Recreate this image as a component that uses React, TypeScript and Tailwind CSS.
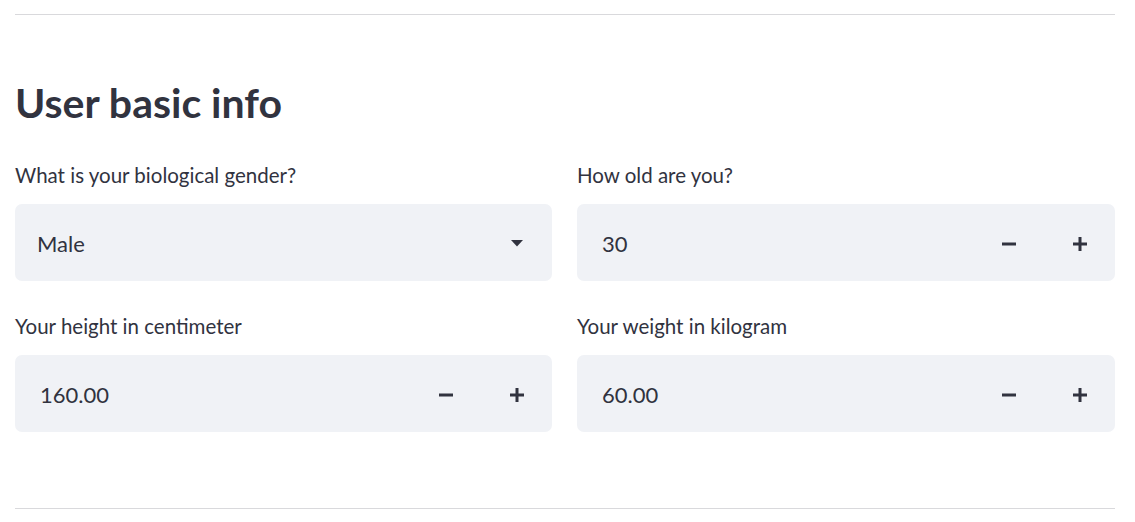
import React from "react";

function Minus() {
  return (
    <svg width="14" height="14" viewBox="0 0 14 14" className="text-[#31333f]">
      <rect x="0" y="5.5" width="14" height="3" fill="currentColor" />
    </svg>
  );
}

function Plus() {
  return (
    <svg width="14" height="14" viewBox="0 0 14 14" className="text-[#31333f]">
      <rect x="0" y="5.5" width="14" height="3" fill="currentColor" />
      <rect x="5.5" y="0" width="3" height="14" fill="currentColor" />
    </svg>
  );
}

function Caret() {
  return (
    <svg width="12" height="7" viewBox="0 0 12 7" className="text-[#31333f]">
      <path d="M0 0 L12 0 L6 6.5 Z" fill="currentColor" />
    </svg>
  );
}

function Label({ children }: { children: React.ReactNode }) {
  return <div className="mb-[17px] h-[24px] text-[20.5px] leading-[24px] text-[#31333f]">{children}</div>;
}

function NumberField({ label, value }: { label: string; value: string }) {
  return (
    <div className="flex flex-col">
      <Label>{label}</Label>
      <div className="flex h-[77px] items-center rounded-[7px] bg-[#f0f2f6] pt-[2px]">
        <div className="flex-1 pl-[25px] text-[22px] text-[#31333f]">{value}</div>
        <button className="flex h-full w-[70px] items-center justify-center">
          <Minus />
        </button>
        <button className="flex h-full w-[71px] items-center justify-center">
          <Plus />
        </button>
      </div>
    </div>
  );
}

function SelectField({ label, value }: { label: string; value: string }) {
  return (
    <div className="flex flex-col">
      <Label>{label}</Label>
      <div className="flex h-[77px] items-center rounded-[7px] bg-[#f0f2f6] pl-[22px] pr-[29px] pt-[2px]">
        <div className="flex-1 text-[22px] text-[#31333f]">{value}</div>
        <Caret />
      </div>
    </div>
  );
}

export default function App() {
  return (
    <div className="min-h-screen bg-white pl-[15px] pr-[20px] pt-[14px] font-['Lato',sans-serif] text-[#31333f]">
      <div className="border-t border-[#d9d9dc]" />
      <h2 className="mt-[61px] mb-[33px] text-[41px] font-bold leading-[54px] text-[#31333f]">User basic info</h2>
      <div className="grid grid-cols-[537px_1fr] gap-x-[25px] gap-y-[33px]">
        <SelectField label="What is your biological gender?" value="Male" />
        <NumberField label="How old are you?" value="30" />
        <NumberField label="Your height in centimeter" value="160.00" />
        <NumberField label="Your weight in kilogram" value="60.00" />
      </div>
      <div className="mt-[76px] border-t border-[#d9d9dc]" />
    </div>
  );
}
